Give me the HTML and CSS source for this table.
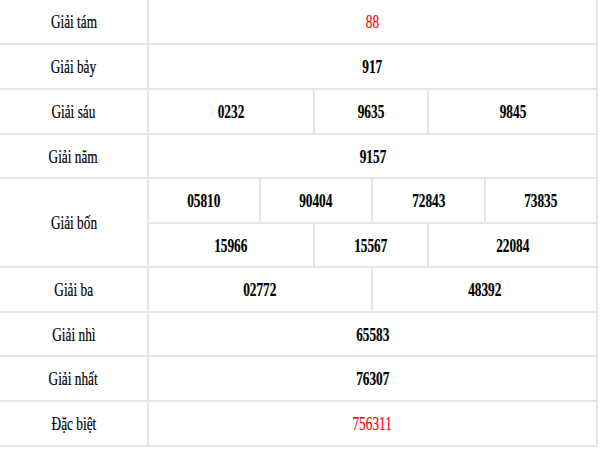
FILE: index.html
```html
<!DOCTYPE html>
<html lang="vi">
<head>
<meta charset="utf-8">
<title>Kết quả</title>
<link rel="stylesheet" href="styles.css">
</head>
<body>
<div class="table">
  <div class="row h43">
    <div class="label"><span class="t">Giải tám</span></div>
    <div class="vals one"><div class="cell"><span class="t red">88</span></div></div>
  </div>
  <div class="row h43">
    <div class="label"><span class="t">Giải bảy</span></div>
    <div class="vals one"><div class="cell"><span class="t num">917</span></div></div>
  </div>
  <div class="row h43">
    <div class="label"><span class="t">Giải sáu</span></div>
    <div class="vals three"><div class="cell"><span class="t num">0232</span></div><div class="cell"><span class="t num">9635</span></div><div class="cell"><span class="t num">9845</span></div></div>
  </div>
  <div class="row h42">
    <div class="label"><span class="t">Giải năm</span></div>
    <div class="vals one"><div class="cell"><span class="t num">9157</span></div></div>
  </div>
  <div class="row h87">
    <div class="label"><span class="t">Giải bốn</span></div>
    <div class="vals stack">
      <div class="sub four h43"><div class="cell"><span class="t num">05810</span></div><div class="cell"><span class="t num">90404</span></div><div class="cell"><span class="t num">72843</span></div><div class="cell"><span class="t num">73835</span></div></div>
      <div class="sub three h42 top"><div class="cell"><span class="t num">15966</span></div><div class="cell"><span class="t num">15567</span></div><div class="cell"><span class="t num">22084</span></div></div>
    </div>
  </div>
  <div class="row h43">
    <div class="label"><span class="t">Giải ba</span></div>
    <div class="vals two"><div class="cell"><span class="t num">02772</span></div><div class="cell"><span class="t num">48392</span></div></div>
  </div>
  <div class="row h42">
    <div class="label"><span class="t">Giải nhì</span></div>
    <div class="vals one"><div class="cell"><span class="t num">65583</span></div></div>
  </div>
  <div class="row h43">
    <div class="label"><span class="t">Giải nhất</span></div>
    <div class="vals one"><div class="cell"><span class="t num">76307</span></div></div>
  </div>
  <div class="row h43">
    <div class="label"><span class="t">Đặc biệt</span></div>
    <div class="vals one"><div class="cell"><span class="t red">756311</span></div></div>
  </div>
</div>
</body>
</html>
```
FILE: styles.css
```css
* { box-sizing: border-box; }
html, body { margin: 0; padding: 0; background: #fff; }
body {
  font-family: "Liberation Serif", "Times New Roman", serif;
  font-size: 19px;
  color: #000;
}
.table { width: 598px; }
.row {
  display: flex;
  border-bottom: 2px solid #e6e6e6;
}
.row.h43, .row.h42, .row.h87 { box-sizing: content-box; }
.h43 { height: 43px; }
.h42 { height: 42px; }
.h87 { height: 87px; }
.label {
  width: 149px;
  flex: none;
  border-right: 2px solid #e6e6e6;
  display: flex;
  align-items: center;
  justify-content: center;
}
.vals {
  width: 449px;
  flex: none;
  border-right: 2px solid #e6e6e6;
  display: grid;
}
.one { grid-template-columns: 447px; }
.two { grid-template-columns: 224px 223px; }
.three { grid-template-columns: 166px 114px 167px; }
.four { grid-template-columns: 112px 112px 113px 110px; }
.stack { display: flex; flex-direction: column; }
.sub { display: grid; width: 447px; box-sizing: content-box; }
.sub.top { border-top: 2px solid #e6e6e6; }
.cell {
  display: flex;
  align-items: center;
  justify-content: center;
  border-right: 2px solid #e6e6e6;
}
.cell:last-child { border-right: none; }
.t {
  display: inline-block;
  transform: scaleX(0.7);
  line-height: 1;
  white-space: nowrap;
  -webkit-text-stroke: 0.2px currentColor;
}
.num { font-weight: bold; }
.red { color: #ff0000; }
```
